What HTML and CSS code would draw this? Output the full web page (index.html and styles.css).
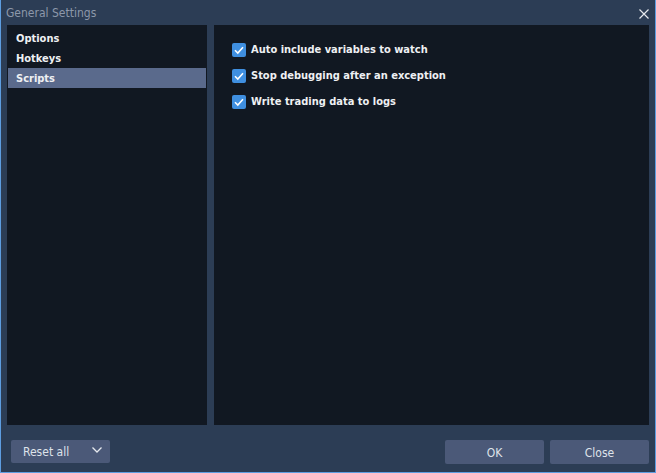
FILE: index.html
```html
<!DOCTYPE html>
<html>
<head>
<meta charset="utf-8">
<link rel="stylesheet" href="styles.css">
</head>
<body>
<div class="window">
  <div class="titlebar">
    <span class="title">General Settings</span>
    <svg class="close-x" width="10" height="10" viewBox="0 0 10 10"><path d="M0.5 0.5 L9.5 9.5 M9.5 0.5 L0.5 9.5" stroke="#e6e9ee" stroke-width="1.2"/></svg>
  </div>
  <div class="content">
    <div class="sidebar">
      <div class="item">Options</div>
      <div class="item">Hotkeys</div>
      <div class="item selected">Scripts</div>
    </div>
    <div class="main">
      <label class="check"><span class="box"><svg width="14" height="14" viewBox="0 0 14 14"><path d="M3 7.2 L5.8 10 L11 4.3" fill="none" stroke="#fff" stroke-width="1.6"/></svg></span>Auto include variables to watch</label>
      <label class="check"><span class="box"><svg width="14" height="14" viewBox="0 0 14 14"><path d="M3 7.2 L5.8 10 L11 4.3" fill="none" stroke="#fff" stroke-width="1.6"/></svg></span>Stop debugging after an exception</label>
      <label class="check"><span class="box"><svg width="14" height="14" viewBox="0 0 14 14"><path d="M3 7.2 L5.8 10 L11 4.3" fill="none" stroke="#fff" stroke-width="1.6"/></svg></span>Write trading data to logs</label>
    </div>
  </div>
  <div class="footer">
    <div class="btn reset"><span>Reset all</span><svg width="10" height="6" viewBox="0 0 10 6"><path d="M0.5 0.5 L5 5 L9.5 0.5" fill="none" stroke="#e6e9ee" stroke-width="1.3"/></svg></div>
    <div class="right-btns">
      <div class="btn">OK</div>
      <div class="btn">Close</div>
    </div>
  </div>
</div>
</body>
</html>
```
FILE: styles.css
```css
html, body {
  margin: 0;
  padding: 0;
  background: #2c3d55;
}
.window {
  width: 656px;
  height: 473px;
  box-sizing: border-box;
  background: #2c3d55;
  border: 1px solid #5d9de0;
  border-top: none;
  display: flex;
  flex-direction: column;
  font-family: "DejaVu Sans Condensed", "DejaVu Sans", sans-serif;
  font-size: 11px;
  font-weight: bold;
  color: #eef0f3;
}
.titlebar {
  height: 25px;
  display: flex;
  align-items: center;
  justify-content: space-between;
  padding: 0 6px 0 5px;
}
.title {
  font-weight: normal;
  font-size: 12px;
  color: #8c98aa;
  margin-top: 1px;
}
.close-x {
  margin-top: 3px;
}
.content {
  height: 400px;
  display: flex;
  gap: 7px;
  padding: 0 6px;
}
.sidebar {
  width: 200px;
  background: #111822;
  padding: 3px 1px;
  box-sizing: border-box;
}
.item {
  height: 20px;
  line-height: 21px;
  padding-left: 8px;
}
.item.selected {
  background: #5a6a8c;
}
.main {
  flex: 1;
  background: #111822;
  padding: 18px 0 0 18px;
  display: flex;
  flex-direction: column;
  gap: 12px;
}
.check {
  display: flex;
  align-items: center;
  height: 14px;
  line-height: 14px;
}
.box {
  width: 14px;
  height: 14px;
  background: #3f8fe0;
  border-radius: 2px;
  margin-right: 5px;
  display: block;
}
.box svg { display: block; }
.footer {
  flex: 1;
  display: flex;
  align-items: flex-start;
  justify-content: space-between;
  padding: 15px 6px 0 10px;
}
.btn {
  width: 99px;
  height: 24px;
  background: #4b5978;
  border-radius: 2px;
  display: flex;
  align-items: center;
  justify-content: center;
  color: #dfe3ea;
  font-weight: normal;
  font-size: 12px;
  padding-top: 1px;
  box-sizing: border-box;
}
.btn.reset {
  justify-content: space-between;
  padding: 1px 8px 0 12px;
  height: 23px;
}
.btn.reset svg { margin-top: -4px; }
.right-btns {
  display: flex;
  gap: 6px;
}
```
